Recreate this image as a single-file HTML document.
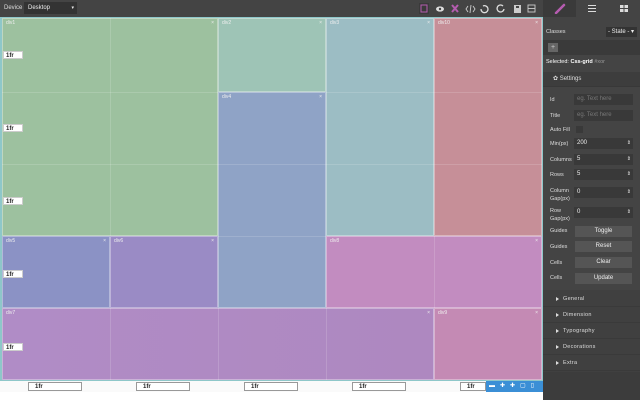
<!DOCTYPE html>
<html><head><meta charset="utf-8"><style>
*{box-sizing:border-box;margin:0;padding:0}
body{width:640px;height:400px;overflow:hidden;background:#fff;font-family:"Liberation Sans",sans-serif;position:relative}
.a{position:absolute}
.top{left:0;top:0;width:640px;height:17px;background:#444}
.cell{position:absolute;border:1px solid rgba(255,255,255,.35);font-size:5px;color:#eee;padding:1px 3px}
.cell .x{position:absolute;right:3px;top:1px;font-size:5px}
.gl{position:absolute;background:rgba(255,255,255,.15)}
.lbl{position:absolute;left:3px;width:20px;height:8px;background:#fff;font-size:6px;font-weight:bold;color:#222;padding-left:2px;line-height:8px;border:1px solid #ccc}
.bin{position:absolute;top:382px;height:9px;background:#fff;border:1px solid #999;font-size:6px;font-weight:bold;color:#222;padding-left:6px;line-height:8px}
.panel{left:543px;top:0;width:97px;height:400px;background:#444;color:#ddd;font-size:5.5px}
.row{position:absolute;left:7px;font-size:5.5px;color:#ddd}
.inp{position:absolute;left:574px;width:59px;height:11px;background:#393939;color:#eee;font-size:6px;padding-left:3px;line-height:11px}
.btn{position:absolute;left:575px;width:57px;height:11px;background:#555;color:#eee;font-size:6px;text-align:center;line-height:11px}
.sec{position:absolute;left:543px;width:97px;height:16px;border-bottom:1px solid #3a3a3a;font-size:5.5px;color:#ddd;padding-left:20px;line-height:16px;letter-spacing:.3px}
.sec:before{content:"";position:absolute;left:13px;top:6px;border-left:3px solid #ddd;border-top:2px solid transparent;border-bottom:2px solid transparent}
</style></head><body>
<div class="a top"></div>
<div class="a" style="left:4px;top:5px;font-size:6px;color:#ddd">Device</div>
<div class="a" style="left:24px;top:2px;width:53px;height:12px;background:#333;color:#eee;font-size:6px;line-height:12px;padding-left:4px">Desktop<span style="position:absolute;right:3px;font-size:5px">▾</span></div>
<!-- toolbar icons -->
<svg class="a" style="left:416px;top:2px" width="124" height="13" viewBox="0 0 124 13">
<rect x="3" y="1" width="10" height="11" fill="#3a3a3a"/><rect x="5" y="3" width="6" height="7" fill="none" stroke="#b55cb0" stroke-width="1"/>
<ellipse cx="24" cy="7" rx="4" ry="2.6" fill="#ddd"/><circle cx="24" cy="7" r="1.2" fill="#444"/>
<path d="M36 3l6 7M42 3l-6 7" stroke="#b55cb0" stroke-width="2"/>
<path d="M52 4l-2 3 2 3M57 4l2 3-2 3M55 3l-1 8" stroke="#ccc" stroke-width=".9" fill="none"/>
<path d="M67 4a3.5 3.5 0 1 1-2 3" stroke="#ddd" stroke-width="1.3" fill="none"/>
<path d="M87 4a3.5 3.5 0 1 0 1 3" stroke="#ddd" stroke-width="1.3" fill="none"/>
<rect x="98" y="3" width="7" height="8" fill="#ccc"/><rect x="100" y="4" width="3" height="2" fill="#444"/>
<rect x="112" y="3" width="7" height="7" fill="none" stroke="#ccc" stroke-width=".9"/><path d="M112 6.5h7" stroke="#ccc" stroke-width=".9"/>
</svg>
<!-- canvas -->
<div class="a" style="left:0;top:17px;width:543px;height:365px;background:#8ec7c9"></div>
<div class="cell" style="left:2px;top:18px;width:216px;height:218px;background:#9dc19f">div1<span class="x">×</span></div>
<div class="cell" style="left:218px;top:18px;width:108px;height:74px;background:#9ec4b6">div2<span class="x">×</span></div>
<div class="cell" style="left:326px;top:18px;width:108px;height:218px;background:#9cbdc4">div3<span class="x">×</span></div>
<div class="cell" style="left:434px;top:18px;width:108px;height:218px;background:#c68f98">div10<span class="x">×</span></div>
<div class="cell" style="left:218px;top:92px;width:108px;height:216px;background:#8fa3c6">div4<span class="x">×</span></div>
<div class="cell" style="left:2px;top:236px;width:108px;height:72px;background:#8b92c5">div5<span class="x">×</span></div>
<div class="cell" style="left:110px;top:236px;width:108px;height:72px;background:#9a8bc5">div6<span class="x">×</span></div>
<div class="cell" style="left:326px;top:236px;width:216px;height:72px;background:#c28cc0">div8<span class="x">×</span></div>
<div class="cell" style="left:2px;top:308px;width:432px;height:72px;background:linear-gradient(90deg,#b08cc6,#ae88c0)">div7<span class="x">×</span></div>
<div class="cell" style="left:434px;top:308px;width:108px;height:72px;background:#c48ab4">div9<span class="x">×</span></div>
<div class="gl" style="left:110px;top:18px;width:1px;height:218px"></div>
<div class="gl" style="left:2px;top:92px;width:216px;height:1px"></div>
<div class="gl" style="left:2px;top:164px;width:216px;height:1px"></div>
<div class="gl" style="left:326px;top:92px;width:216px;height:1px"></div>
<div class="gl" style="left:326px;top:164px;width:216px;height:1px"></div>
<div class="gl" style="left:218px;top:164px;width:108px;height:1px"></div>
<div class="gl" style="left:218px;top:236px;width:108px;height:1px"></div>
<div class="gl" style="left:110px;top:308px;width:1px;height:72px"></div>
<div class="gl" style="left:218px;top:308px;width:1px;height:72px"></div>
<div class="gl" style="left:326px;top:308px;width:1px;height:72px"></div>
<div class="gl" style="left:434px;top:236px;width:1px;height:72px"></div>
<div class="lbl" style="top:124px">1fr</div>
<div class="lbl" style="top:197px">1fr</div>
<div class="lbl" style="top:270px">1fr</div>
<div class="lbl" style="top:343px">1fr</div>
<div class="lbl" style="top:51px">1fr</div>
<div class="a" style="left:0;top:381px;width:543px;height:11px;background:#fafafa"></div>
<div class="bin" style="left:28px;width:54px">1fr</div>
<div class="bin" style="left:136px;width:54px">1fr</div>
<div class="bin" style="left:244px;width:54px">1fr</div>
<div class="bin" style="left:352px;width:54px">1fr</div>
<div class="bin" style="left:460px;width:26px">1fr</div>
<div class="a" style="left:486px;top:381px;width:57px;height:11px;background:#3b8fd6;color:#fff;font-size:6px;line-height:11px;letter-spacing:5px;padding-left:3px">▬✚✚▢▯</div>
<!-- panel -->
<div class="a panel"></div>
<div class="a" style="left:543px;top:0;width:33px;height:17px;background:#3a3a3a"></div>
<svg class="a" style="left:554px;top:3px" width="12" height="11"><path d="M2 10L10 2" stroke="#b55cb0" stroke-width="2.5" stroke-linecap="round"/></svg>
<div class="a" style="left:588px;top:5px;width:8px;height:7px;border-top:1px solid #ddd;border-bottom:1px solid #ddd"><div style="margin-top:2px;height:1px;background:#ddd"></div></div>
<div class="a" style="left:620px;top:5px;width:8px;height:7px;background:linear-gradient(90deg,#ddd 45%,#444 45%,#444 55%,#ddd 55%)"><div style="margin-top:3px;height:1px;background:#444"></div></div>
<div class="row" style="left:546px;top:29px">Classes</div>
<div class="a" style="left:606px;top:27px;width:31px;height:10px;background:#333;color:#eee;font-size:6px;line-height:10px;padding-left:2px">- State - ▾</div>
<div class="a" style="left:543px;top:40px;width:97px;height:15px;background:#3a3a3a"></div>
<div class="a" style="left:548px;top:43px;width:10px;height:9px;background:#666;color:#ccc;font-size:7px;text-align:center;line-height:9px">+</div>
<div class="row" style="left:546px;top:59px;color:#fff">Selected: <b>Css-grid</b> <span style="color:#999">#xor</span></div>
<div class="a" style="left:543px;top:72px;width:97px;height:15px;background:#3d3d3d;border-bottom:1px solid #383838;font-size:6px;color:#ddd;line-height:15px;padding-left:10px">✿ Settings</div>
<div class="row" style="left:550px;top:97px">Id</div><div class="inp" style="top:94px;color:#777">eg. Text here</div>
<div class="row" style="left:550px;top:113px">Title</div><div class="inp" style="top:110px;color:#777">eg. Text here</div>
<div class="row" style="left:550px;top:127px">Auto Fill</div><div class="a" style="left:576px;top:126px;width:7px;height:7px;background:#393939"></div>
<div class="row" style="left:550px;top:141px">Min(px)</div><div class="inp" style="top:138px">200<span style="position:absolute;right:2px;font-size:5px">⇕</span></div>
<div class="row" style="left:550px;top:157px">Columns</div><div class="inp" style="top:154px">5<span style="position:absolute;right:2px;font-size:5px">⇕</span></div>
<div class="row" style="left:550px;top:172px">Rows</div><div class="inp" style="top:169px">5<span style="position:absolute;right:2px;font-size:5px">⇕</span></div>
<div class="row" style="left:550px;top:187px;line-height:8px">Column<br>Gap(px)</div><div class="inp" style="top:187px">0<span style="position:absolute;right:2px;font-size:5px">⇕</span></div>
<div class="row" style="left:550px;top:207px;line-height:8px">Row<br>Gap(px)</div><div class="inp" style="top:207px">0<span style="position:absolute;right:2px;font-size:5px">⇕</span></div>
<div class="row" style="left:550px;top:228px">Guides</div><div class="btn" style="top:226px">Toggle</div>
<div class="row" style="left:550px;top:244px">Guides</div><div class="btn" style="top:241px">Reset</div>
<div class="row" style="left:550px;top:260px">Cells</div><div class="btn" style="top:257px">Clear</div>
<div class="row" style="left:550px;top:275px">Cells</div><div class="btn" style="top:273px">Update</div>
<div class="a" style="left:543px;top:290px;width:97px;height:82px;background:#404040"></div>
<div class="sec" style="top:291px">General</div>
<div class="sec" style="top:307px">Dimension</div>
<div class="sec" style="top:323px">Typography</div>
<div class="sec" style="top:339px">Decorations</div>
<div class="sec" style="top:355px">Extra</div>
<div class="a" style="left:543px;top:372px;width:97px;height:28px;background:#3c3c3c"></div>
</body></html>
